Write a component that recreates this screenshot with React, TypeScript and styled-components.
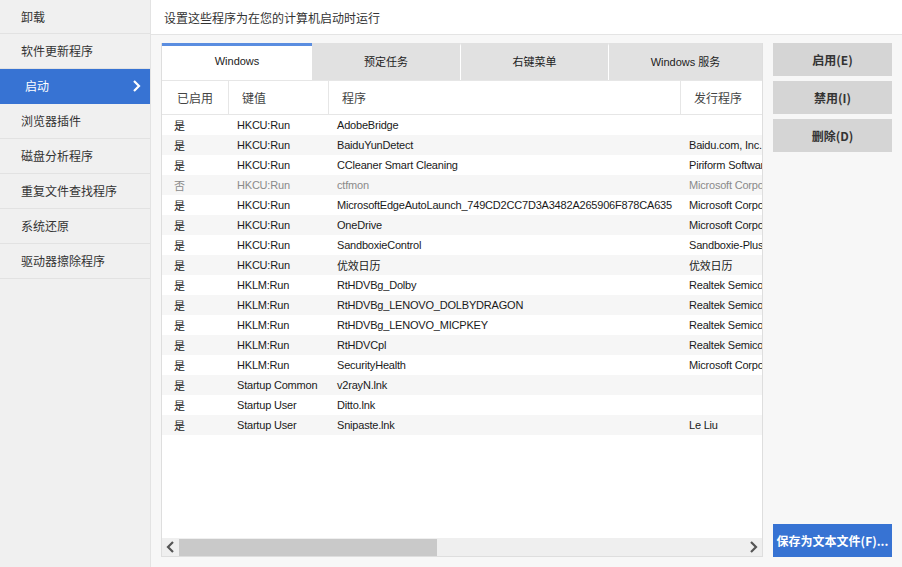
import styled, { createGlobalStyle } from "styled-components";

const GlobalStyle = createGlobalStyle`
  html, body {
    margin: 0;
    padding: 0;
    background: #f7f7f7;
  }
  body {
    font-family: "Liberation Sans", "Noto Sans CJK SC", sans-serif;
    color: #222;
  }
`;

const Layout = styled.div`
  display: grid;
  grid-template-columns: 151px 1fr;
  width: 902px;
  height: 567px;
  overflow: hidden;
`;

// left navigation
const Sidebar = styled.nav`
  background: #f0f0f0;
  border-right: 1px solid #e3e3e3;
`;

const NavItem = styled.div<{ $active?: boolean }>`
  display: flex;
  align-items: center;
  justify-content: space-between;
  box-sizing: border-box;
  height: 35px;
  padding: ${(p) => (p.$active ? "0 9px 1px 25px" : "0 0 1px 21px")};
  border-bottom: 1px solid ${(p) => (p.$active ? "#3773d3" : "#e2e2e2")};
  background: ${(p) => (p.$active ? "#3773d3" : "transparent")};
  color: ${(p) => (p.$active ? "#fff" : "#333")};
  font-family: "Noto Sans CJK SC", sans-serif;
  font-size: 12px;

  &:first-child {
    height: 34px;
  }
`;

const Main = styled.main`
  display: flex;
  flex-direction: column;
  min-width: 0;
`;

const TitleBar = styled.div`
  height: 34px;
  display: flex;
  align-items: center;
  padding-left: 13px;
  background: #fff;
  border-bottom: 1px solid #e4e4e4;
  font-family: "Noto Sans CJK SC", sans-serif;
  font-size: 12px;
  color: #333;
`;

const Content = styled.div`
  flex: 1;
  display: grid;
  grid-template-columns: 602px 119px;
  column-gap: 10px;
  padding: 8px 10px 10px 10px;
  min-height: 0;
`;

const Panel = styled.section`
  display: flex;
  flex-direction: column;
  background: #fff;
  border: 1px solid #dedede;
  border-top: none;
  min-height: 0;
`;

const Tabs = styled.div`
  display: grid;
  grid-template-columns: 150px 148px 148px 1fr;
  height: 37px;
`;

const Tab = styled.div<{ $active?: boolean }>`
  display: flex;
  align-items: center;
  justify-content: center;
  background: ${(p) => (p.$active ? "#fff" : "#e1e1e1")};
  border-top: 3px solid ${(p) => (p.$active ? "#5a8de0" : "#e1e1e1")};
  border-left: ${(p) => (p.$active ? "none" : "1px solid #fff")};
  font-size: 11px;
  color: #222;
  padding-bottom: 4px;

  &:nth-child(2) {
    border-left: none;
  }
`;

const cols = "66px 100px 352px 1fr";

const HeadRow = styled.div`
  display: grid;
  grid-template-columns: ${cols};
  box-sizing: border-box;
  height: 35px;
  border-top: 1px solid #e6e6e6;
  border-bottom: 1px solid #e6e6e6;
`;

const HeadCell = styled.div<{ $center?: boolean }>`
  display: flex;
  align-items: center;
  justify-content: ${(p) => (p.$center ? "center" : "flex-start")};
  padding-left: ${(p) => (p.$center ? "0" : "13px")};
  font-family: "Noto Sans CJK SC", sans-serif;
  font-size: 12px;
  color: #444;

  & + & {
    border-left: 1px solid #e6e6e6;
  }
`;

const Body = styled.div`
  flex: 1;
  overflow: hidden;
`;

const Row = styled.div<{ $off?: boolean }>`
  display: grid;
  grid-template-columns: ${cols};
  height: 20px;
  align-items: center;
  font-size: 11px;
  letter-spacing: -0.2px;
  color: ${(p) => (p.$off ? "#8a8a8a" : "#1a1a1a")};
  white-space: nowrap;

  &:nth-child(even) {
    background: #f6f6f6;
  }
`;

const Cell = styled.div<{ $first?: boolean }>`
  overflow: hidden;
  padding-left: ${(p) => (p.$first ? "12px" : "9px")};
`;

// horizontal scroll bar at the bottom of the list
const ScrollBar = styled.div`
  display: flex;
  align-items: center;
  height: 18px;
  background: #efefef;
`;

const Arrow = styled.div`
  width: 17px;
  display: flex;
  justify-content: center;
  color: #555;
`;

const Thumb = styled.div`
  width: 258px;
  height: 17px;
  background: #c9c9c9;
`;

const Track = styled.div`
  flex: 1;
`;

const Actions = styled.aside`
  display: flex;
  flex-direction: column;
  gap: 5px;
`;

const ActionButton = styled.button<{ $primary?: boolean }>`
  height: 33px;
  border: none;
  padding: 0;
  background: ${(p) => (p.$primary ? "#3773d3" : "#d5d5d5")};
  color: ${(p) => (p.$primary ? "#fff" : "#333")};
  font-family: "Noto Sans CJK SC", sans-serif;
  font-size: 12px;
  font-weight: 700;
  white-space: nowrap;
  ${(p) => (p.$primary ? "margin-top: auto;" : "")}
`;

const navItems = [
  "卸载",
  "软件更新程序",
  "启动",
  "浏览器插件",
  "磁盘分析程序",
  "重复文件查找程序",
  "系统还原",
  "驱动器擦除程序",
];

type Entry = { on: boolean; key: string; prog: string; pub: string };

const entries: Entry[] = [
  { on: true, key: "HKCU:Run", prog: "AdobeBridge", pub: "" },
  { on: true, key: "HKCU:Run", prog: "BaiduYunDetect", pub: "Baidu.com, Inc." },
  { on: true, key: "HKCU:Run", prog: "CCleaner Smart Cleaning", pub: "Piriform Software Ltd" },
  { on: false, key: "HKCU:Run", prog: "ctfmon", pub: "Microsoft Corporation" },
  { on: true, key: "HKCU:Run", prog: "MicrosoftEdgeAutoLaunch_749CD2CC7D3A3482A265906F878CA635", pub: "Microsoft Corporation" },
  { on: true, key: "HKCU:Run", prog: "OneDrive", pub: "Microsoft Corporation" },
  { on: true, key: "HKCU:Run", prog: "SandboxieControl", pub: "Sandboxie-Plus.com" },
  { on: true, key: "HKCU:Run", prog: "优效日历", pub: "优效日历" },
  { on: true, key: "HKLM:Run", prog: "RtHDVBg_Dolby", pub: "Realtek Semiconductor" },
  { on: true, key: "HKLM:Run", prog: "RtHDVBg_LENOVO_DOLBYDRAGON", pub: "Realtek Semiconductor" },
  { on: true, key: "HKLM:Run", prog: "RtHDVBg_LENOVO_MICPKEY", pub: "Realtek Semiconductor" },
  { on: true, key: "HKLM:Run", prog: "RtHDVCpl", pub: "Realtek Semiconductor" },
  { on: true, key: "HKLM:Run", prog: "SecurityHealth", pub: "Microsoft Corporation" },
  { on: true, key: "Startup Common", prog: "v2rayN.lnk", pub: "" },
  { on: true, key: "Startup User", prog: "Ditto.lnk", pub: "" },
  { on: true, key: "Startup User", prog: "Snipaste.lnk", pub: "Le Liu" },
];

function Chevron({ dir }: { dir: "left" | "right" }) {
  const d = dir === "right" ? "M2 1 L7 6 L2 11" : "M7 1 L2 6 L7 11";
  return (
    <svg width="9" height="12" viewBox="0 0 9 12">
      <path d={d} fill="none" stroke="currentColor" strokeWidth="2.2" />
    </svg>
  );
}

export default function App() {
  return (
    <>
      <GlobalStyle />
      <Layout>
        <Sidebar>
          {navItems.map((label) => (
            <NavItem key={label} $active={label === "启动"}>
              <span>{label}</span>
              {label === "启动" && <Chevron dir="right" />}
            </NavItem>
          ))}
        </Sidebar>

        <Main>
          <TitleBar>设置这些程序为在您的计算机启动时运行</TitleBar>
          <Content>
            <Panel>
              <Tabs>
                <Tab $active>Windows</Tab>
                <Tab>预定任务</Tab>
                <Tab>右键菜单</Tab>
                <Tab>Windows 服务</Tab>
              </Tabs>
              <HeadRow>
                <HeadCell $center>已启用</HeadCell>
                <HeadCell>键值</HeadCell>
                <HeadCell>程序</HeadCell>
                <HeadCell>发行程序</HeadCell>
              </HeadRow>
              <Body>
                {entries.map((e) => (
                  <Row key={e.prog} $off={!e.on}>
                    <Cell $first>{e.on ? "是" : "否"}</Cell>
                    <Cell>{e.key}</Cell>
                    <Cell>{e.prog}</Cell>
                    <Cell>{e.pub}</Cell>
                  </Row>
                ))}
              </Body>
              <ScrollBar>
                <Arrow>
                  <Chevron dir="left" />
                </Arrow>
                <Thumb />
                <Track />
                <Arrow>
                  <Chevron dir="right" />
                </Arrow>
              </ScrollBar>
            </Panel>

            <Actions>
              <ActionButton>启用(E)</ActionButton>
              <ActionButton>禁用(I)</ActionButton>
              <ActionButton>删除(D)</ActionButton>
              <ActionButton $primary>保存为文本文件(F)...</ActionButton>
            </Actions>
          </Content>
        </Main>
      </Layout>
    </>
  );
}
